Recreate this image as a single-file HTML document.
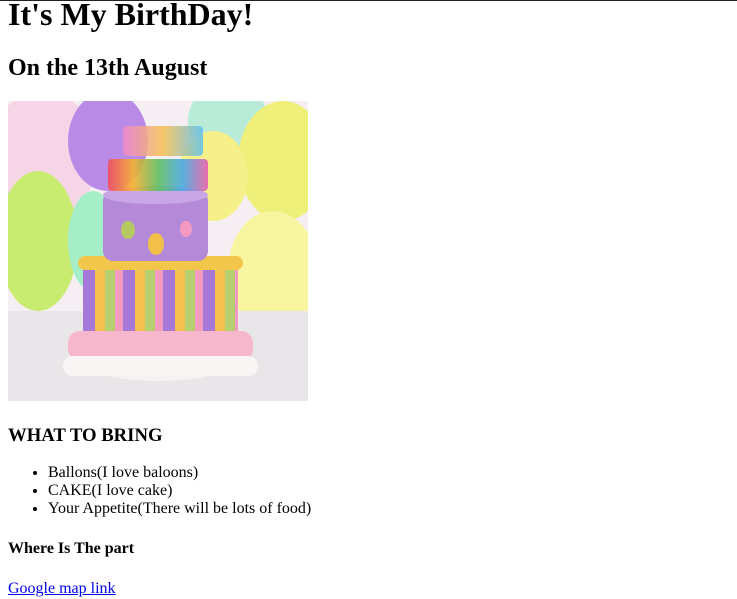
<!DOCTYPE html>
<html><head><style>
html,body{margin:0;padding:0;background:#fff;width:737px;height:599px;overflow:hidden;position:relative;font-family:"Liberation Serif",serif;color:#000}
.a{position:absolute;left:8px;margin:0;white-space:nowrap}
h1{font-size:32px;line-height:37px}
h2{font-size:24px;line-height:28px}
h3{font-size:18.72px;line-height:22px}
h4{font-size:16px;line-height:18px}
ul{margin:0;padding-left:40px;font-size:16px;line-height:18px}
a{color:#00e;font-size:16px;line-height:18px}
.img{position:absolute;left:8px;top:101px;width:300px;height:300px;overflow:hidden;background:#f5eef2}
.img div{position:absolute}
</style></head><body>
<div style="position:absolute;left:0;top:0;width:737px;height:1px;background:#222"></div>
<h1 class="a" style="top:-4px">It's My BirthDay!</h1>
<h2 class="a" style="top:54px">On the 13th August</h2>
<div class="img">
<div style="left:-20px;top:-10px;width:110px;height:130px;border-radius:50%;background:#f6d6e6"></div>
<div style="left:60px;top:-10px;width:80px;height:100px;border-radius:50%;background:#b98ae6"></div>
<div style="left:180px;top:-20px;width:80px;height:80px;border-radius:50%;background:#b8ecd8"></div>
<div style="left:230px;top:0px;width:90px;height:120px;border-radius:50%;background:#eef07a"></div>
<div style="left:170px;top:30px;width:70px;height:90px;border-radius:50%;background:#f5f08a"></div>
<div style="left:-10px;top:70px;width:80px;height:140px;border-radius:50%;background:#c8ec70"></div>
<div style="left:60px;top:90px;width:50px;height:100px;border-radius:50%;background:#a6eec8"></div>
<div style="left:220px;top:110px;width:90px;height:120px;border-radius:50%;background:#f7f5a0"></div>
<div style="left:0;top:210px;width:300px;height:90px;background:#e9e6ea"></div>
<div style="left:60px;top:220px;width:180px;height:60px;border-radius:50%;background:#f4f2f2"></div>
<div style="left:75px;top:160px;width:155px;height:80px;background:#a678d8;border-radius:8px 8px 20px 20px"></div>
<div style="left:75px;top:165px;width:155px;height:70px;background:repeating-linear-gradient(90deg,#a678d8 0 12px,#f4c050 12px 22px,#b6d070 22px 32px,#f59ac0 32px 40px)"></div>
<div style="left:70px;top:155px;width:165px;height:14px;background:#f2c64a;border-radius:7px"></div>
<div style="left:95px;top:90px;width:105px;height:70px;background:#b48ad8;border-radius:10px"></div>
<div style="left:95px;top:85px;width:105px;height:18px;background:#c9a6e6;border-radius:50%"></div>
<div style="left:113px;top:120px;width:14px;height:18px;background:#b6c860;border-radius:50%"></div>
<div style="left:140px;top:132px;width:16px;height:22px;background:#f2c04a;border-radius:50%"></div>
<div style="left:172px;top:120px;width:12px;height:16px;background:#f49ac0;border-radius:50%"></div>
<div style="left:100px;top:58px;width:100px;height:32px;background:linear-gradient(90deg,#f04e60,#f6b030,#60c060,#4aa8e8,#e860b0);border-radius:4px;opacity:.9"></div>
<div style="left:115px;top:25px;width:80px;height:30px;background:linear-gradient(90deg,#f08ad0,#f6c050,#60c0f0);border-radius:4px;opacity:.85"></div>
<div style="left:60px;top:230px;width:185px;height:30px;background:#f6b6cc;border-radius:12px"></div>
<div style="left:55px;top:255px;width:195px;height:20px;background:#f8f6f4;border-radius:10px"></div>
</div>
<h3 class="a" style="top:425px">WHAT TO BRING</h3>
<ul class="a" style="top:464px;left:8px"><li>Ballons(I love baloons)</li><li>CAKE(I love cake)</li><li>Your Appetite(There will be lots of food)</li></ul>
<h4 class="a" style="top:540px">Where Is The part</h4>
<a class="a" style="top:580px" href="#">Google map link</a>
</body></html>
